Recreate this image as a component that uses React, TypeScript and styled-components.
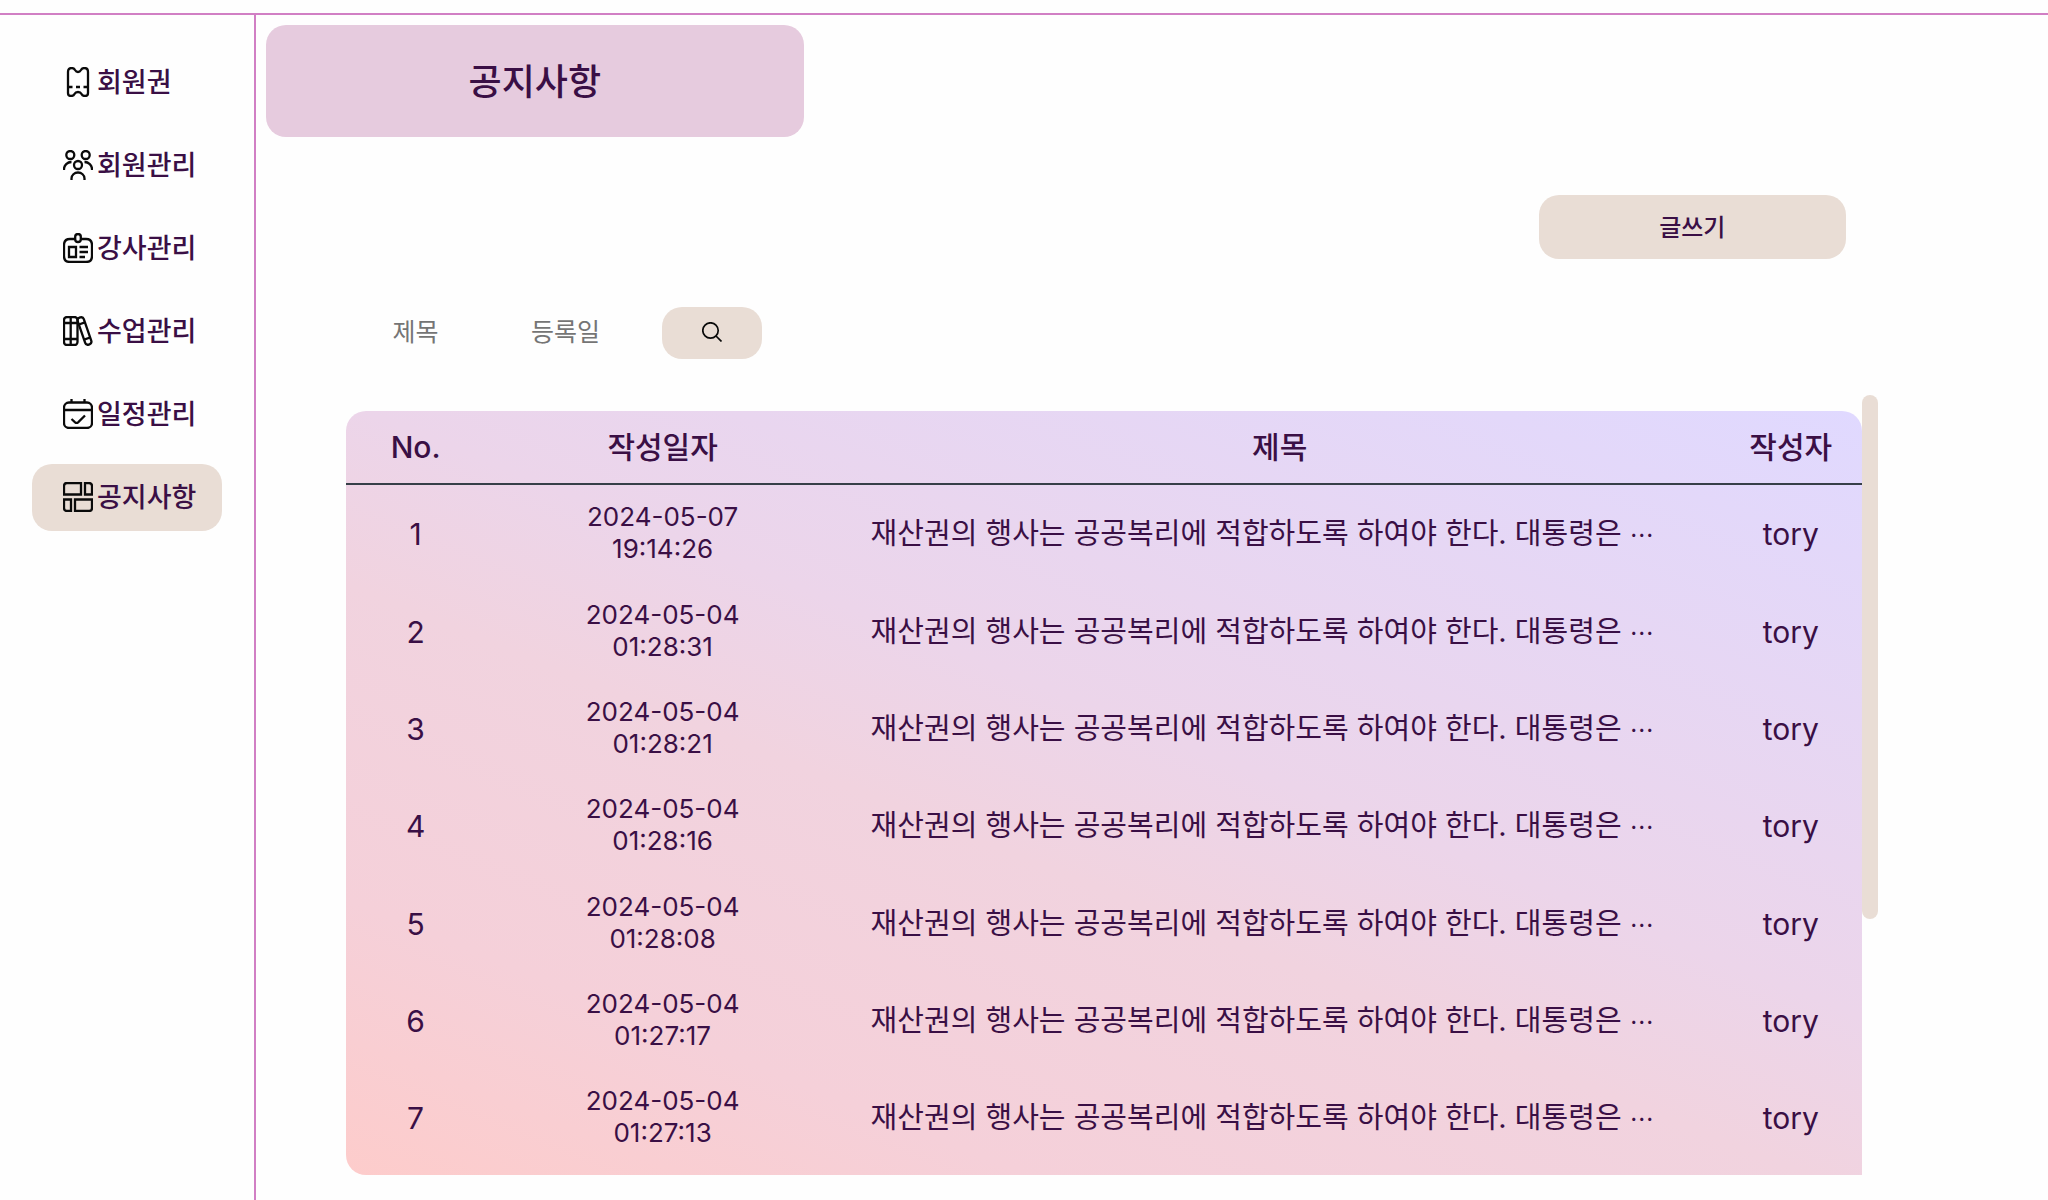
import React from 'react';
import styled, { createGlobalStyle } from 'styled-components';

const colors = {
  ink: '#3a0f45',
  line: '#d17fc4',
  sand: '#e9ddd5',
  pink: '#e6cbde',
  rule: '#363f48',
  placeholder: '#757575',
};

const GlobalStyle = createGlobalStyle`
  * { box-sizing: border-box; }
  body {
    margin: 0;
    background: #fefefe;
    color: ${colors.ink};
    font-family: 'Inter', 'Noto Sans CJK KR', sans-serif;
  }
  button, input { font: inherit; color: inherit; border: 0; }
`;

const Page = styled.div`
  display: flex;
  flex-direction: column;
  min-height: 100vh;
  padding-top: 13px;
`;

const Body = styled.div`
  display: flex;
  flex: 1;
  border-top: 2px solid ${colors.line};
`;

const Sidebar = styled.nav`
  flex: 0 0 256px;
  padding: 34px 32px 0;
  border-right: 2px solid ${colors.line};
`;

const Menu = styled.ul`
  display: flex;
  flex-direction: column;
  gap: 16px;
  margin: 0;
  padding: 0;
  list-style: none;
`;

const MenuLink = styled.a<{ $active?: boolean }>`
  display: flex;
  align-items: center;
  gap: 4px;
  height: 67px;
  padding-left: 31px;
  border-radius: 20px;
  background: ${(p) => (p.$active ? colors.sand : 'transparent')};
  color: inherit;
  font-size: 27px;
  font-weight: 500;
  line-height: 36px;
  white-space: nowrap;
  text-decoration: none;
`;

const MenuIcon = styled.svg`
  flex: none;
  width: 30px;
  height: 30px;
  margin-bottom: 1px;
  fill: none;
  stroke: #0a0a0a;
  stroke-width: 2.3;
`;

const Main = styled.main`
  flex: 1;
  min-width: 0;
  padding-top: 10px;
`;

const Title = styled.h1`
  display: flex;
  align-items: center;
  justify-content: center;
  width: 30%;
  height: 112px;
  margin: 0 0 0 10px;
  padding-bottom: 4px;
  border-radius: 20px;
  background: ${colors.pink};
  font-size: 36px;
  font-weight: 500;
`;

const Content = styled.div`
  width: 85.5%;
  margin-left: 5%;
`;

const Actions = styled.div`
  display: flex;
  justify-content: flex-end;
  padding: 58px 32px 48px 0;
`;

const WriteButton = styled.button`
  width: 307px;
  height: 64px;
  padding: 0 0 4px;
  border-radius: 20px;
  background: ${colors.sand};
  font-size: 24px;
  font-weight: 500;
`;

const SearchForm = styled.form`
  display: flex;
  align-items: center;
  gap: 10px;
`;

const SearchInput = styled.input`
  width: 140px;
  height: 52px;
  padding: 0 0 2px;
  background: transparent;
  font-size: 25px;
  text-align: center;
  &::placeholder {
    color: ${colors.placeholder};
    opacity: 1;
  }
`;

const SearchButton = styled.button`
  display: flex;
  align-items: center;
  justify-content: center;
  width: 100px;
  height: 52px;
  margin-left: 16px;
  padding: 0 0 2px;
  border-radius: 20px;
  background: ${colors.sand};
`;

const SearchIcon = styled.svg`
  width: 20px;
  height: 20px;
  fill: none;
  stroke: #0a0a0a;
  stroke-width: 1.7;
`;

const ListArea = styled.section`
  display: flex;
  margin-top: 36px;
`;

const TablePanel = styled.div`
  flex: 1;
  min-width: 0;
  margin-top: 16px;
  padding-bottom: 8px;
  border-radius: 20px 20px 0 20px;
  background: linear-gradient(22deg, #fdcccb, #f5d0d9 20%, #f1d3df 43%, #ecd5ea 56%, #e0d9ff);
`;

const ScrollTrack = styled.div`
  width: 16px;
`;

const ScrollThumb = styled.div`
  height: 524px;
  border-radius: 8px;
  background: ${colors.sand};
`;

const Table = styled.table`
  width: 100%;
  height: 756px;
  border-collapse: collapse;
  table-layout: fixed;
  font-size: 30px;
  line-height: 40px;
  text-align: center;
`;

const HeadCell = styled.th<{ $width?: number }>`
  width: ${(p) => (p.$width ? `${p.$width}px` : 'auto')};
  height: 73px;
  padding: 0;
  border-bottom: 2px solid ${colors.rule};
  font-weight: 500;
`;

const Cell = styled.td`
  padding: 0;
`;

const DateCell = styled(Cell)`
  padding-bottom: 2px;
  font-size: 26px;
  line-height: 32px;
`;

const SubjectCell = styled(Cell)`
  padding: 0 31px;
  overflow: hidden;
  font-size: 29px;
  text-align: left;
  white-space: nowrap;
`;

const Ellipsis = styled.span`
  font-family: 'Noto Sans CJK KR', sans-serif;
  font-size: 24px;
`;

const menu = [
  {
    label: '회원권',
    icon: (
      <path d="M5 20V5Q5 1 8.5 1Q11 1 12 3Q13.2 5 15 5Q16.8 5 18 3Q19 1 21.500 1Q25 1 25 5V26Q25 29 22 29Q19.500 29 18.500 27Q17.500 25 15 25Q12.500 25 11.500 27Q10.500 29 8 29Q5 29 5 26ZM5 20h4.500M13 20h4M20.500 20H25" />
    ),
  },
  {
    label: '회원관리',
    icon: (
      <>
        <circle cx="7.300" cy="5" r="4" />
        <circle cx="22.700" cy="5" r="4" />
        <circle cx="15" cy="15" r="4" />
        <path d="M1 20v-1a7.500 7 0 0 1 7.500-7M29 20v-1a7.500 7 0 0 0-7.500-7M8.500 30v-1.500a6.500 6 0 0 1 13 0V30" />
      </>
    ),
  },
  {
    label: '강사관리',
    icon: (
      <>
        <path d="M12 6H7Q1 6 1 12V23Q1 29 7 29H23Q29 29 29 23V12Q29 6 23 6H18" />
        <rect x="12.200" y="1" width="5.600" height="8" rx="2.800" />
        <path d="M6 14h7v10H6zM16.500 14H25M16.500 19H25M16.500 24H22" />
      </>
    ),
  },
  {
    label: '수업관리',
    icon: (
      <>
        <rect x="1" y="1" width="13.500" height="28" rx="3" />
        <path d="M7.700 1v28M1 7h13.500M1 23h13.500" />
        <g transform="rotate(-19 21.500 15)">
          <rect x="18.300" y="0.800" width="6.400" height="28.400" rx="2.800" />
          <path d="M18.300 7h6.400M18.300 23h6.400" />
        </g>
      </>
    ),
  },
  {
    label: '일정관리',
    icon: (
      <>
        <rect x="1" y="3.500" width="28" height="25.500" rx="5" />
        <path d="M1 11h28M8.500 0v4M21.500 0v4M8.500 20l3.600 3.300q1.500 1.200 3 0L22 16.500" />
      </>
    ),
  },
  {
    label: '공지사항',
    active: true,
    icon: (
      <path d="M18 1H4Q1 1 1 4V12.500H18ZM22 1H26Q29 1 29 4V12.500H22ZM1 17.500H8V29H4Q1 29 1 26ZM12 17.500H29V26Q29 29 26 29H12Z" />
    ),
  },
];

const subject = '재산권의 행사는 공공복리에 적합하도록 하여야 한다. 대통령은';

const notices = [
  ['2024-05-07', '19:14:26'],
  ['2024-05-04', '01:28:31'],
  ['2024-05-04', '01:28:21'],
  ['2024-05-04', '01:28:16'],
  ['2024-05-04', '01:28:08'],
  ['2024-05-04', '01:27:17'],
  ['2024-05-04', '01:27:13'],
].map(([date, time], i) => ({ no: i + 1, date, time, subject, writer: 'tory' }));

export default function App() {
  return (
    <Page lang="ko">
      <GlobalStyle />
      <Body>
        <Sidebar>
          <Menu>
            {menu.map((item) => (
              <li key={item.label}>
                <MenuLink href="#" $active={item.active} aria-current={item.active ? 'page' : undefined}>
                  <MenuIcon viewBox="0 0 30 30" aria-hidden="true">{item.icon}</MenuIcon>
                  {item.label}
                </MenuLink>
              </li>
            ))}
          </Menu>
        </Sidebar>
        <Main>
          <Title>공지사항</Title>
          <Content>
            <Actions>
              <WriteButton type="button">글쓰기</WriteButton>
            </Actions>
            <SearchForm onSubmit={(e) => e.preventDefault()}>
              <SearchInput type="text" placeholder="제목" aria-label="제목" />
              <SearchInput type="text" placeholder="등록일" aria-label="등록일" />
              <SearchButton type="submit" aria-label="검색">
                <SearchIcon viewBox="0 0 20 20" aria-hidden="true">
                  <circle cx="8.500" cy="8.500" r="7.700" />
                  <path d="M14 14l5.500 5.500" />
                </SearchIcon>
              </SearchButton>
            </SearchForm>
            <ListArea>
              <TablePanel>
                <Table>
                  <thead>
                    <tr>
                      <HeadCell $width={140}>No.</HeadCell>
                      <HeadCell $width={354}>작성일자</HeadCell>
                      <HeadCell>제목</HeadCell>
                      <HeadCell $width={142}>작성자</HeadCell>
                    </tr>
                  </thead>
                  <tbody>
                    {notices.map((n) => (
                      <tr key={n.no}>
                        <Cell>{n.no}</Cell>
                        <DateCell>
                          {n.date}
                          <br />
                          {n.time}
                        </DateCell>
                        <SubjectCell>
                          {n.subject} <Ellipsis>…</Ellipsis>
                        </SubjectCell>
                        <Cell>{n.writer}</Cell>
                      </tr>
                    ))}
                  </tbody>
                </Table>
              </TablePanel>
              <ScrollTrack>
                <ScrollThumb />
              </ScrollTrack>
            </ListArea>
          </Content>
        </Main>
      </Body>
    </Page>
  );
}
